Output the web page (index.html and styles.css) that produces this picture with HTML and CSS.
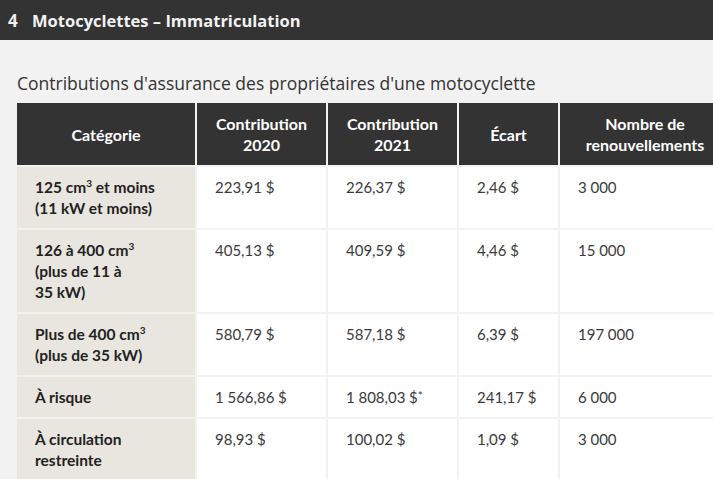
FILE: index.html
```html
<!DOCTYPE html>
<html lang="fr">
<head>
<meta charset="utf-8">
<title>Motocyclettes – Immatriculation</title>
<link rel="stylesheet" href="styles.css">
</head>
<body>
<header class="bar">
  <span class="bar-num">4</span>
  <h1 class="bar-title">Motocyclettes – Immatriculation</h1>
</header>
<main class="content">
  <p class="caption">Contributions d'assurance des propriétaires d'une motocyclette</p>
  <table class="grid">
    <colgroup>
      <col class="c1"><col class="c2"><col class="c3"><col class="c4"><col class="c5">
    </colgroup>
    <thead>
      <tr>
        <th>Catégorie</th>
        <th>Contribution<br>2020</th>
        <th>Contribution<br>2021</th>
        <th>Écart</th>
        <th>Nombre de<br>renouvellements</th>
      </tr>
    </thead>
    <tbody>
      <tr>
        <td class="cat">125 cm<sup>3</sup> et moins<br>(11 kW et moins)</td>
        <td>223,91&#8239;$</td>
        <td>226,37&#8239;$</td>
        <td>2,46&#8239;$</td>
        <td>3&#8239;000</td>
      </tr>
      <tr>
        <td class="cat">126 à 400 cm<sup>3</sup><br>(plus de 11 à<br>35 kW)</td>
        <td>405,13&#8239;$</td>
        <td>409,59&#8239;$</td>
        <td>4,46&#8239;$</td>
        <td>15&#8239;000</td>
      </tr>
      <tr>
        <td class="cat">Plus de 400 cm<sup>3</sup><br>(plus de 35 kW)</td>
        <td>580,79&#8239;$</td>
        <td>587,18&#8239;$</td>
        <td>6,39&#8239;$</td>
        <td>197&#8239;000</td>
      </tr>
      <tr>
        <td class="cat">À risque</td>
        <td>1&#8239;566,86&#8239;$</td>
        <td>1&#8239;808,03&#8239;$<span class="star">*</span></td>
        <td>241,17&#8239;$</td>
        <td>6&#8239;000</td>
      </tr>
      <tr>
        <td class="cat">À circulation<br>restreinte</td>
        <td>98,93&#8239;$</td>
        <td>100,02&#8239;$</td>
        <td>1,09&#8239;$</td>
        <td>3&#8239;000</td>
      </tr>
    </tbody>
  </table>
</main>
</body>
</html>
```

FILE: styles.css
```css
html, body {
  margin: 0;
  padding: 0;
}
body {
  background: #f2f2f2;
  overflow: hidden;
  width: 713px;
  height: 479px;
  font-family: Lato, "Open Sans", sans-serif;
  color: #222;
}
.bar {
  display: flex;
  align-items: center;
  height: 40px;
  background: #333333;
  color: #f2f2f2;
  padding-left: 8px;
  font-family: "Open Sans", sans-serif;
  font-weight: 700;
  font-size: 17px;
}
.bar-num {
  width: 24px;
}
.bar-title {
  margin: 0;
  font-size: 16.5px;
  font-weight: 700;
  white-space: nowrap;
}
.content {
  padding: 31px 0 0 17px;
}
.caption {
  margin: 0 0 8px;
  font-family: "Open Sans", sans-serif;
  font-size: 17.5px;
  line-height: 24px;
  color: #333;
  white-space: nowrap;
}
.grid {
  border-collapse: separate;
  border-spacing: 0;
  table-layout: fixed;
  width: 713px;
  font-size: 15px;
  line-height: 21px;
}
.c1 { width: 178px; }
.c2 { width: 131px; }
.c3 { width: 131px; }
.c4 { width: 101px; }
.c5 { width: 172px; }
.grid th {
  background: #333333;
  color: #ffffff;
  font-weight: 700;
  font-size: 16px;
  text-align: center;
  vertical-align: middle;
  height: 62px;
  padding: 0 6px;
  box-sizing: border-box;
}
.grid th + th,
.grid td + td {
  border-left: 2px solid #f2f2f2;
}
.grid td {
  background: #ffffff;
  vertical-align: top;
  padding: 10px 10px 9px 18px;
  border-top: 2px solid #f2f2f2;
  color: #3a3a3a;
  white-space: nowrap;
}
.grid td.cat {
  background: #e9e6e0;
  font-weight: 700;
  font-size: 15.5px;
  color: #222;
}
.grid sup {
  font-size: 10px;
  line-height: 0;
  vertical-align: 6px;
}
.star {
  font-size: 12px;
  vertical-align: 3px;
  line-height: 0;
}
```
